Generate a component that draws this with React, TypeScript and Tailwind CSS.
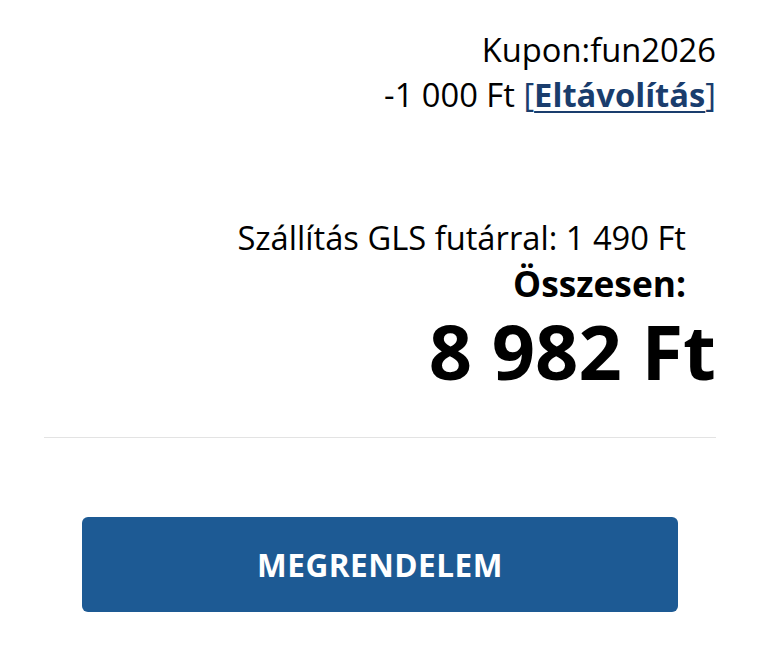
import React from "react";

export default function App() {
  return (
    <div className="w-[760px] h-[646px] bg-white text-black font-['Open_Sans',_'Noto_Sans',_sans-serif]">
      <div className="px-[44px] pt-[27px]">
        {/* coupon */}
        <div className="text-right text-[32.7px] leading-[45px]">
          <div>Kupon:fun2026</div>
          <div>
            -1 000 Ft{" "}
            <span className="text-[#1a3d6d]">
              [
              <a href="#" className="font-bold underline underline-offset-[4px] decoration-2">
                Eltávolítás
              </a>
              ]
            </span>
          </div>
        </div>

        {/* totals */}
        <div className="mt-[98px] text-right">
          <div className="pr-[30px] text-[32.7px] leading-[45px]">Szállítás GLS futárral: 1 490 Ft</div>
          <div className="mt-[5px] pr-[30px] text-[35.3px] leading-[36px] font-bold">Összesen:</div>
          <div className="mt-[14px] text-[75.8px] leading-[71px] font-bold">8 982 Ft</div>
        </div>

        <div className="mt-[51px] border-t border-[#e3e3e3]" />

        <div className="px-[38px] pt-[79px]">
          <button className="w-full h-[95px] rounded-[6px] bg-[#1d5a94] text-white text-[31.5px] font-bold tracking-[0.5px] uppercase">
            Megrendelem
          </button>
        </div>
      </div>
    </div>
  );
}
